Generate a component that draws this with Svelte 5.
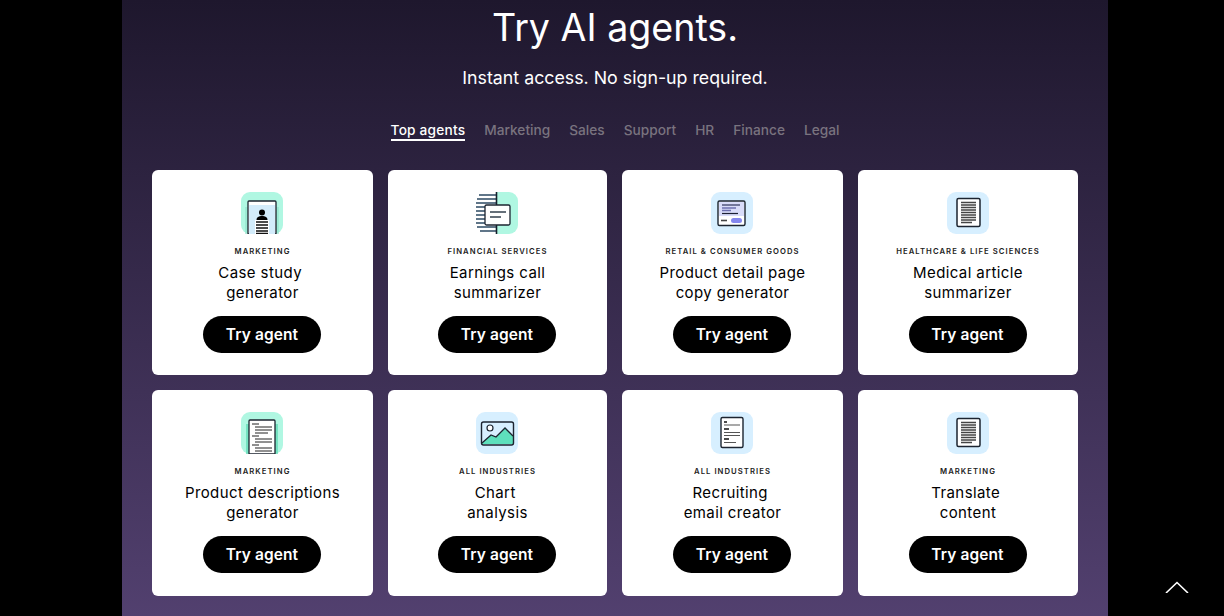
<script>
  const tabs = ['Top agents', 'Marketing', 'Sales', 'Support', 'HR', 'Finance', 'Legal'];
  const agents = [
    { icon: 'profile', cat: 'MARKETING', l1: 'Case study\u00a0', l2: 'generator' },
    { icon: 'earnings', cat: 'FINANCIAL SERVICES', l1: 'Earnings call', l2: 'summarizer' },
    { icon: 'product', cat: 'RETAIL & CONSUMER GOODS', l1: 'Product detail page', l2: 'copy generator' },
    { icon: 'doc', cat: 'HEALTHCARE & LIFE SCIENCES', l1: 'Medical article', l2: 'summarizer' },
    { icon: 'desc', cat: 'MARKETING', l1: 'Product descriptions', l2: 'generator' },
    { icon: 'chart', cat: 'ALL INDUSTRIES', l1: 'Chart\u00a0', l2: 'analysis' },
    { icon: 'email', cat: 'ALL INDUSTRIES', l1: 'Recruiting\u00a0', l2: 'email creator' },
    { icon: 'doc', cat: 'MARKETING', l1: 'Translate\u00a0', l2: 'content' }
  ];
</script>

<div class="page">
  <main class="panel">
    <h1>Try AI agents.</h1>
    <p class="sub">Instant access. No sign-up required.</p>
    <nav class="tabs">
      {#each tabs as t, i}
        <span class="tab" class:active={i === 0}>{t}</span>
      {/each}
    </nav>
    <section class="grid">
      {#each agents as a}
        <article class="card">
          <svg class="icon" viewBox="0 0 42 42" width="42" height="42" aria-hidden="true">
            {#if a.icon === 'profile'}
              <rect width="42" height="42" rx="9" fill="#b0f7e2" />
              <path d="M4 15H38V42H4Z" fill="#8fe3cb" opacity=".6" />
              <path d="M7 42V10a1 1 0 0 1 1-1H34a1 1 0 0 1 1 1V42Z" fill="#fff" stroke="#1c2430" stroke-width="1.3" />
              <rect x="8" y="13" width="26" height="29" fill="#d3ecfb" />
              <circle cx="21" cy="20.500" r="3" fill="#000" />
              <path d="M15.500 28c0-3 2.500-4 5.500-4s5.500 1 5.500 4Z" fill="#000" />
              <rect x="14" y="28" width="14" height="14" fill="#fff" />
              <path d="M15 30H27M15 33H27M15 36H27M15 39H27M15 41.500H27" stroke="#111" stroke-width="1.5" />
            {:else if a.icon === 'earnings'}
              <path d="M21 0H33a9 9 0 0 1 9 9V33a9 9 0 0 1-9 9H21Z" fill="#b0f7e2" />
              <path d="M3 3H20M1 7H20M0 11H20M0 15H9M0 19H9M0 23H9M0 27H9M0 31H9M1 35H20M4 39H20" stroke="#2c4a63" stroke-width="1.6" />
              <path d="M20.500 0V42" stroke="#15202c" stroke-width="1.6" />
              <rect x="9" y="13" width="25" height="20" rx="1.5" fill="#fff" stroke="#1c2430" stroke-width="1.3" />
              <path d="M14 20H30M14 25H25" stroke="#33404d" stroke-width="1.5" />
            {:else if a.icon === 'product'}
              <rect width="42" height="42" rx="9" fill="#d7efff" />
              <rect x="7" y="9" width="27" height="24.500" rx="1.5" fill="#fff" stroke="#1c2430" stroke-width="1.4" />
              <rect x="8" y="10" width="25" height="14" fill="#d9dcf9" />
              <path d="M11 13H29" stroke="#3a3f66" stroke-width="1.3" />
              <path d="M11 16H25M11 18.500H20" stroke="#6e70b0" stroke-width="1.4" />
              <path d="M11 21.500H27" stroke="#1d2034" stroke-width="1.2" />
              <path d="M10 28.500H16" stroke="#444" stroke-width="1.6" />
              <rect x="20" y="26" width="11" height="5" rx="2.500" fill="#8486ee" />
            {:else if a.icon === 'doc'}
              <rect width="42" height="42" rx="9" fill="#d7efff" />
              <rect x="10" y="6.500" width="23" height="28" rx="1.5" fill="#fff" stroke="#1c2430" stroke-width="1.5" />
              <path d="M14 10.500H29M14 13H29M14 15.500H29M14 18H29M14 20.500H29M14 23H29M14 25.500H29M14 28H29M14 30.500H25" stroke="#444" stroke-width="1.3" />
            {:else if a.icon === 'desc'}
              <rect width="42" height="42" rx="9" fill="#b0f7e2" />
              <path d="M5 12H37V42H5Z" fill="#5dd9b4" opacity=".7" />
              <path d="M8 42V9a1 1 0 0 1 1-1H33a1 1 0 0 1 1 1V42Z" fill="#fff" stroke="#1c2430" stroke-width="1.3" />
              <path d="M11 12H18M14 15H31M14 18H31M14 21H27M11 24H18M14 27H31M14 30H31M11 33H18M14 36H31M14 39H31" stroke="#222" stroke-width="1" />
            {:else if a.icon === 'chart'}
              <rect width="42" height="42" rx="9" fill="#d7efff" />
              <path d="M6 31L15 23L20 25L29 16L37 24V32H6Z" fill="#5ee0bc" />
              <rect x="5.500" y="10" width="32" height="23" rx="2" fill="none" stroke="#1c2430" stroke-width="1.4" />
              <path d="M6 31L15 23L20 25L29 16L37 24" fill="none" stroke="#1c2430" stroke-width="1.3" />
              <circle cx="14" cy="16" r="3" fill="#fff" stroke="#1c2430" stroke-width="1.2" />
            {:else}
              <rect width="42" height="42" rx="9" fill="#d7efff" />
              <rect x="10" y="5.500" width="22" height="30" rx="1.5" fill="#fff" stroke="#1c2430" stroke-width="1.4" />
              <path d="M13 10H16M13 17H18M13 27H18" stroke="#111" stroke-width="1.3" />
              <path d="M13 13H29M13 20.500H29M13 23.500H29M13 30.500H25" stroke="#555" stroke-width="1.2" />
            {/if}
          </svg>
          <div class="cat">{a.cat}</div>
          <h2>{a.l1}<br />{a.l2}</h2>
          <button type="button">Try agent</button>
        </article>
      {/each}
    </section>
  </main>
  <svg class="up" viewBox="0 0 24 12" width="24" height="12" aria-hidden="true">
    <path d="M1 12L12 1.500L23 12" fill="none" stroke="#fff" stroke-width="1.6" />
  </svg>
</div>

<style>
  :global(body) {
    margin: 0;
    background: #000;
  }
  .page {
    height: 616px;
    overflow: hidden;
    position: relative;
    font-family: Inter, "Open Sans", sans-serif;
    color: #fff;
  }
  .panel {
    width: 986px;
    height: 616px;
    margin: 0 0 0 122px;
    box-sizing: border-box;
    padding: 2px 30px 0;
    background: linear-gradient(180deg, #1e172d 0%, #52406f 100%);
    text-align: center;
  }
  h1 {
    margin: 0;
    height: 52px;
    line-height: 52px;
    font-size: 37.600px;
    font-weight: 400;
  }
  .sub {
    margin: 12px 0 0;
    height: 24px;
    line-height: 24px;
    font-size: 17.800px;
  }
  .tabs {
    display: flex;
    justify-content: center;
    gap: 19px;
    margin-top: 31px;
    height: 23px;
    font-size: 13.700px;
    font-weight: 500;
    color: #79737f;
  }
  .tab {
    height: 20px;
    line-height: 18px;
    box-sizing: border-box;
  }
  .tab.active {
    color: #fff;
    border-bottom: 2px solid #fff;
    letter-spacing: 0.2px;
  }
  .grid {
    display: grid;
    grid-template-columns: 221px 219px 221px 220px;
    grid-auto-rows: 205.300px;
    gap: 15px;
    margin-top: 26.100px;
  }
  .card {
    background: #fff;
    border-radius: 6px;
    display: flex;
    flex-direction: column;
    align-items: center;
    padding-top: 22px;
    box-sizing: border-box;
    color: #000;
  }
  .icon {
    display: block;
    flex: none;
    margin-right: 1px;
  }
  .cat {
    margin-top: 10.500px;
    height: 14px;
    line-height: 14px;
    font-size: 7.700px;
    font-weight: 600;
    letter-spacing: 1.05px;
    color: #222;
  }
  h2 {
    margin: 4.500px 0 0;
    font-size: 15px;
    line-height: 20px;
    font-weight: 400;
    letter-spacing: 0.4px;
  }
  button {
    margin: 12.500px 1px 0 0;
    width: 118px;
    height: 37.500px;
    border: 0;
    border-radius: 19px;
    background: #000;
    color: #fff;
    font: 600 15.500px Inter, sans-serif;
    letter-spacing: 0.1px;
    padding: 0;
  }
  .up {
    position: absolute;
    left: 1165px;
    top: 581px;
  }
</style>
